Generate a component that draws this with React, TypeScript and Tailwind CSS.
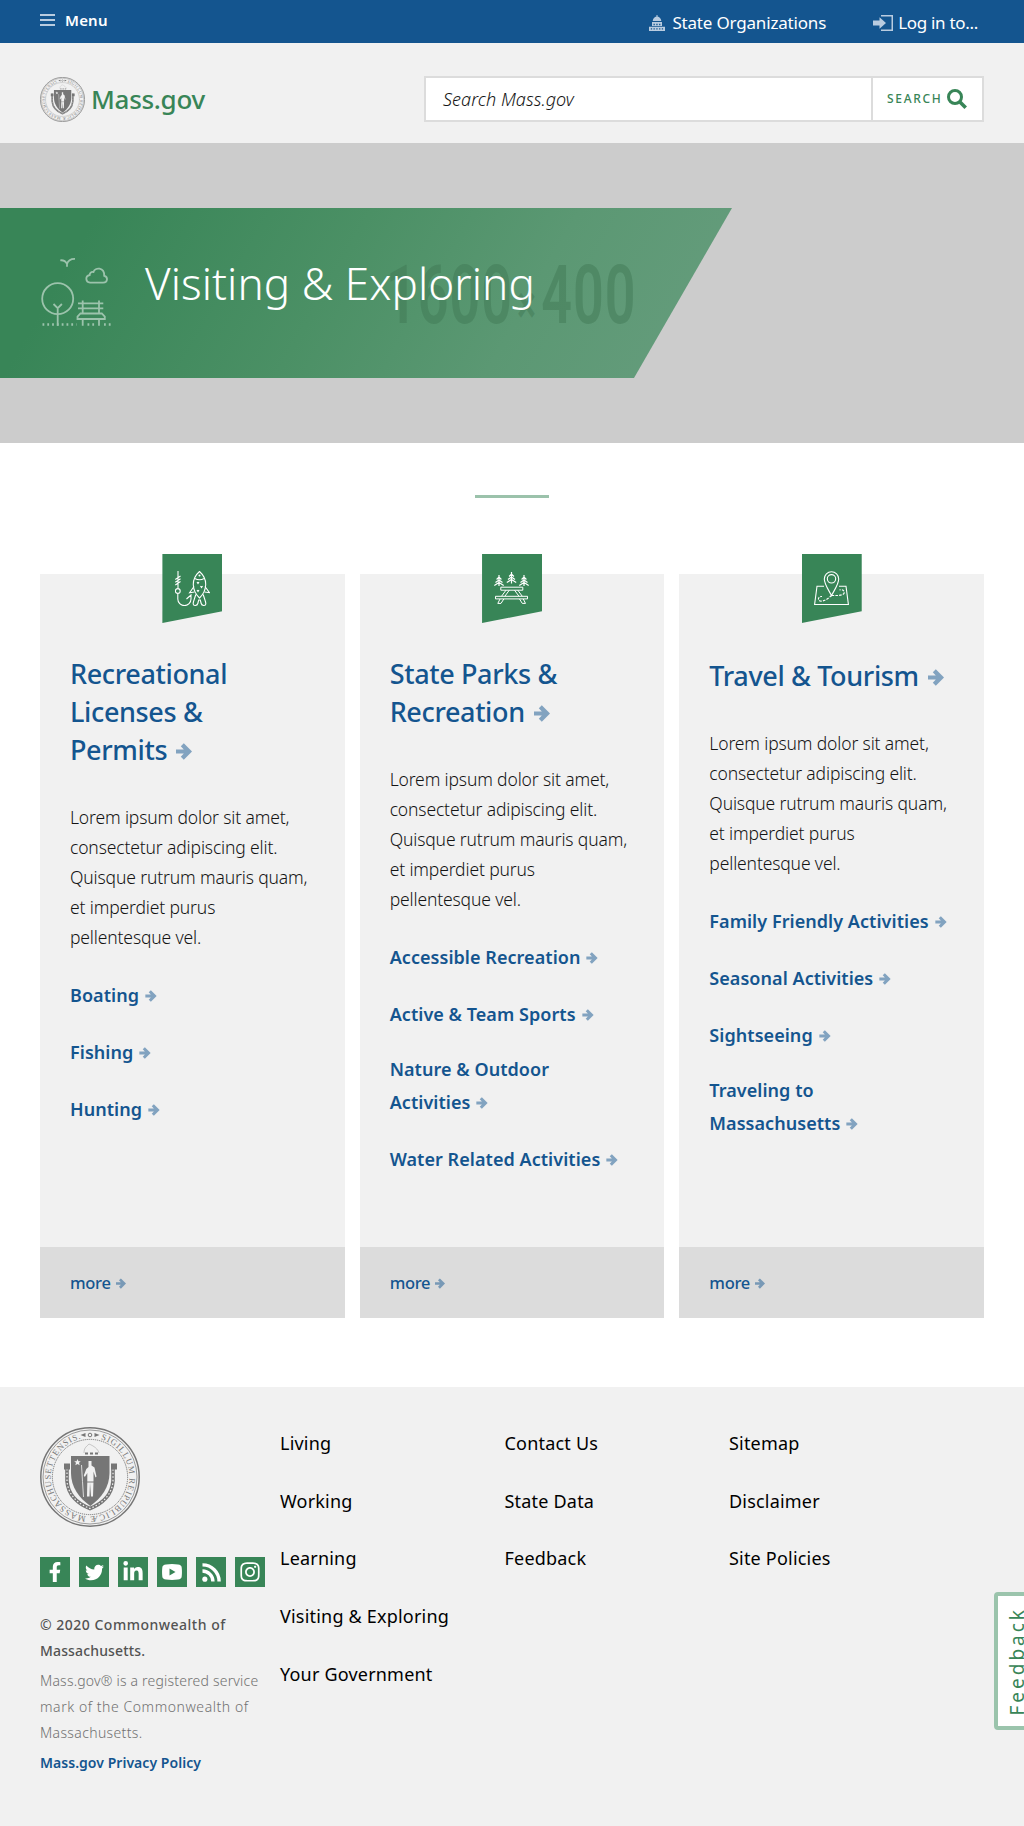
import type { ReactNode } from "react";
import { FaFacebookF, FaInstagram, FaLinkedinIn, FaRss, FaTwitter } from "react-icons/fa";

function Seal({ className }: { className: string }) {
  return (
    <svg viewBox="0 0 100 100" className={className} fill="none" stroke="#767676">
      <circle cx="50" cy="50" r="49.2" strokeWidth="1.5" />
      <circle cx="50" cy="50" r="47" strokeWidth="0.7" />
      <circle cx="50" cy="50" r="37.6" strokeWidth="1" strokeDasharray="1.2 0.8" />
      <defs>
        <path id="seal-ring" d="M50 10.700A39.300 39.300 0 1 1 49.990 10.700" />
      </defs>
      <text fill="#767676" stroke="none" className="font-['Liberation_Serif'] text-[8.6px]">
        <textPath href="#seal-ring" startOffset="11" textLength="226">SIGILLUM REIPUBLICÆ MASSACHUSETTENSIS.</textPath>
      </text>
      <path d="M40.5 8l5-2v4zM59.500 8l-5-2v4z" fill="#767676" stroke="none" />
      <circle cx="50" cy="8" r="1.8" strokeWidth="1" />
      <path d="M31 29h38.500v17c0 14-8 25-19.200 33C39 71 31 60 31 46z" fill="#767676" stroke="none" />
      <path d="M27 37v17c1 14 11 23 23 27.500 12-4.500 22-13.500 23-27.500V37" strokeWidth="3.600" />
      <path d="M27 42v12c1 14 11 23 23 27.500 12-4.500 22-13.500 23-27.500V42" stroke="#f1f1f1" strokeWidth="1.200" strokeDasharray="1.500 2" />
      <path d="M24 36.500h6v6h-6zM71 36.500h6v6h-6z" fill="#767676" stroke="none" />
      <path d="M44 26c0-5 2-6 5-9 5 2 9 5 10 9" strokeWidth="0.6" opacity=".6" />
      <path d="M45 26.500h14" strokeWidth="1.800" strokeDasharray="3 2" />
      <path d="M37.500 32l1 2.200h2.300l-1.800 1.600.700 2.400-2.200-1.300-2.200 1.300.700-2.400-1.800-1.600h2.300z" fill="#f1f1f1" stroke="none" />
      <path d="M48.500 34h3v4.500l3 2 2 9-1 1-2-6v10l-.5 15H51l-1-14-.5 14H47l.3-15V46l-2.500 4-1-1.500 2.500-6.500 2.200-2z" fill="#f1f1f1" stroke="none" />
      <path d="M41.500 38q1 17 2 32" stroke="#f1f1f1" strokeWidth="0.800" />
      <path d="M47 55h7" strokeWidth="1" />
    </svg>
  );
}

function Arrow({ className }: { className: string }) {
  return (
    <svg viewBox="0 0 16 17" className={className} fill="#14558f" fillOpacity="0.5">
      <path d="M0 6.500h7.800L4.800 3.300 7.800.3 16 8.500 7.800 16.700l-3-3 3-3.200H0z" />
    </svg>
  );
}

function FishIcon() {
  return (
    <svg viewBox="0 0 35 35" className="absolute left-[13px] top-[17px] size-[35px]" fill="none" stroke="#fff" strokeWidth="1.100">
      <path d="M3 0v17M.3 8.500 5.500 5M.3 11.300l5.200-3.500M.3 14l5.200-3.500" />
      <circle cx="2.800" cy="20" r="2.400" />
      <path d="M2.800 22.500V28a6.600 6.600 0 0 0 13.200 0v-4l-4.500 4" />
      <path d="M24.500.5c9 8 7.500 19 0 26.500-7.500-7.500-9-18.500 0-26.500zM19.800 7.500q4.700 2.500 9.400 0M22 11l1 1.500 1-1.500M25.500 15l1 1.500 1-1.500M22 19l1 1.500 1-1.500" />
      <path d="M19 15.500l-4.400 6.200 4.900-.7M30 15.500l4.400 6.200-4.900-.7M20.800 23.500c-1 4-2.800 7-2.600 9.500.2 2 4 2 4.600-.5l.9-3.500h1.600l.9 3.500c.6 2.500 4.400 2.500 4.600.5.2-2.500-1.600-5.500-2.600-9.500" />
      <circle cx="24.500" cy="4.500" r=".5" />
    </svg>
  );
}

function ParkIcon() {
  return (
    <svg viewBox="0 0 35 32" className="absolute left-3 top-[18px] h-8 w-[35px]" fill="none" stroke="#fff">
      <path strokeWidth="1.200" d="M5 3v11M2.600 7.500 5 5l2.400 2.500M1.500 10.500 5 8l3.500 2.500M.3 13.500 5 10.500l4.700 3M17.500 0v11.500M15.100 4.500 17.500 2l2.400 2.500M14 7.500 17.500 5 21 7.500M12.800 10.500l4.700-3 4.700 3M30 3v11M27.600 7.500 30 5l2.400 2.500M26.500 10.500 30 8l3.500 2.500M25.300 13.500l4.700-3 4.700 3" />
      <path d="M6.800 15.200h22v3h-22zM1.500 24.300h32v2.600h-32zM12 18.200 7.500 24.300M15.300 18.200l-4.500 6.100M20.500 18.200l4.500 6.100M23.800 18.200l4.500 6.100M6 27l-2.200 4.400H7L9.800 27M29.300 27l2.200 4.400h-3.200L25.500 27" />
    </svg>
  );
}

function MapIcon() {
  return (
    <svg viewBox="0 0 35 34" className="absolute left-3 top-[17px] h-[34px] w-[35px]" fill="none" stroke="#fff" strokeWidth="1.100">
      <path d="M10 15.200H3L.6 33.500h33.800L32 15.200h-7M17.500 24.500C14 18 10.300 13 10.300 8a7.200 7.200 0 0 1 14.400 0c0 5-3.700 10-7.200 16.500z" />
      <circle cx="17.500" cy="7.800" r="4.200" />
      <path strokeDasharray="2.600 1.200" d="M17.500 24.500c-3 3-8 6.300-11.500 5.500-3-1-1.500-5 2-4.500M17.500 24.500c5 0 10 .5 12.500-2 1-3-2-4.500-4.500-3.500" />
    </svg>
  );
}

type Card = { icon: ReactNode; title: string[]; links: string[][] };
const cards: Card[] = [
  { icon: <FishIcon />, title: ["Recreational", "Licenses &", "Permits"], links: [["Boating"], ["Fishing"], ["Hunting"]] },
  {
    icon: <ParkIcon />,
    title: ["State Parks &", "Recreation"],
    links: [["Accessible Recreation"], ["Active & Team Sports"], ["Nature & Outdoor", "Activities"], ["Water Related Activities"]],
  },
  {
    icon: <MapIcon />,
    title: ["Travel & Tourism"],
    links: [["Family Friendly Activities"], ["Seasonal Activities"], ["Sightseeing"], ["Traveling to", "Massachusetts"]],
  },
];
const lorem = ["Lorem ipsum dolor sit amet,", "consectetur adipiscing elit.", "Quisque rutrum mauris quam,", "et imperdiet purus", "pellentesque vel."];
const footerColumns = [
  ["Living", "Working", "Learning", "Visiting & Exploring", "Your Government"],
  ["Contact Us", "State Data", "Feedback"],
  ["Sitemap", "Disclaimer", "Site Policies"],
];

function TopicCard({ icon, title, links }: Card) {
  return (
    <section className="relative flex h-[744px] flex-col bg-[#f1f1f1]">
      <div className="absolute -top-5 left-[122.400px] h-[69px] w-[60px] bg-[#388557] [clip-path:polygon(0_0,100%_0,100%_83%,0_100%)]">{icon}</div>
      <div className={`flex-1 whitespace-nowrap px-[30px] ${title.length === 1 ? "pt-[83px]" : "pt-[81px]"}`}>
        <h2 className="text-[27px] font-medium leading-[38px] tracking-[-0.36px] text-[#14558f]">
          {title.map((line, i) => (
            <span key={line} className="block">
              {line}
              {i === title.length - 1 && <Arrow className="ml-[9px] inline-block h-[17px] w-4 align-[0px]" />}
            </span>
          ))}
        </h2>
        <p className="mt-[32.500px] text-[17.5px] font-light leading-[30px] tracking-[-0.14px] text-[#141414]">
          {lorem.map((line) => <span key={line} className="block">{line}</span>)}
        </p>
        <ul className="mt-[27.500px] text-[18px] font-[560] leading-[33px] tracking-[0.05px] text-[#14558f]">
          {links.map((lines) => (
            <li key={lines[0]} className={lines.length > 1 ? "-mt-0.5 mb-6" : "mb-6"}>
              {lines.map((line, i) => (
                <span key={line} className="block">
                  {line}
                  {i === lines.length - 1 && <Arrow className="ml-1.5 inline-block h-3 w-[12px] align-[0px]" />}
                </span>
              ))}
            </li>
          ))}
        </ul>
      </div>
      <a className="flex h-[71px] items-center bg-[#dcdcdc] px-[30px] pt-[2px] text-[16.5px] font-medium tracking-[-0.3px] text-[#14558f]">
        more
        <Arrow className="ml-[5px] h-[11px] w-[10px]" />
      </a>
    </section>
  );
}

export default function App() {
  return (
    <div className="relative h-[1826px] w-[1024px] overflow-hidden bg-white font-['Noto_Sans',sans-serif]">
      <div className="flex h-[43px] justify-between bg-[#14558f] px-10 text-white">
        <div className="flex h-10 items-center text-[15px] font-semibold tracking-[0.200px]">
          <span className="mr-[10px] flex flex-col gap-[3px]">
            <i className="h-0.5 w-[15px] bg-[#b9cce0]" />
            <i className="h-0.5 w-[15px] bg-[#b9cce0]" />
            <i className="h-0.5 w-[15px] bg-[#b9cce0]" />
          </span>
          Menu
        </div>
        <div className="flex h-[46px] items-center pr-[6px] text-[17px] tracking-[-0.18px]">
          <svg viewBox="0 0 16 16" className="mr-[7px] size-4" fill="#b9cce0">
            <path d="M7.500 0h1v1.500c2 .3 3.500 2 3.800 4.500H3.700C4 3.500 5.500 1.800 7.500 1.500zM3 7h10v4H3zM0 11.700h16V16H0z" />
            <path d="M4.500 8.700h1.300v1.600H4.500zM7.300 8.700h1.300v1.600H7.300zM10.100 8.700h1.300v1.600h-1.300zM1.800 13.200h1.300v1.400H1.800zM4.500 13.200h1.300v1.400H4.500zM7.300 13.200h1.300v1.400H7.300zM10.100 13.200h1.300v1.400h-1.300zM12.800 13.200h1.300v1.400h-1.300z" fill="#14558f" />
          </svg>
          State Organizations
          <svg viewBox="0 0 20 16" className="ml-[47px] mr-[5px] h-4 w-5" fill="#b9cce0">
            <path d="M8 0h12v16H8v-1.500h10.500v-13H8zM0 5.500h6.500V2.300L13 8l-6.500 5.700v-3.200H0z" />
          </svg>
          <span className="tracking-[-0.3px]">Log in to...</span>
        </div>
      </div>

      <header className="flex h-[100px] items-start justify-between bg-[#f1f1f1] px-10">
        <div className="flex pt-[34px]">
          <Seal className="size-[45px]" />
          <span className="ml-[6px] text-[26px] font-medium leading-[45px] tracking-[-0.3px] text-[#388557]">Mass.gov</span>
        </div>
        <div className="mt-[33px] flex h-[46px] w-[560px] border-2 border-[#dcdcdc] bg-white">
          <div className="flex w-[447px] items-center border-r-2 border-[#dcdcdc] pl-[17px] text-[18px] font-light italic tracking-[0.05px] text-[#141414]">Search Mass.gov</div>
          <div className="flex items-center pl-[14px] text-[12px] font-medium tracking-[1.700px] text-[#388557]">
            SEARCH
            <svg viewBox="0 0 20 20" className="ml-[4px] size-5" fill="none" stroke="#388557">
              <circle cx="8" cy="8" r="6.500" strokeWidth="3" />
              <path d="M12.500 12.500l6.200 6.200" strokeWidth="3.600" />
            </svg>
          </div>
        </div>
      </header>

      <div className="relative flex h-[300px] items-center overflow-hidden bg-[#ccc]">
        <div className="relative flex h-[170px] w-[732px] bg-[linear-gradient(120deg,#388557_12%,#4b9065_45%,#5b9873_70%,#679d7e_100%)] pl-[41px] pt-[49px] [clip-path:polygon(0_0,100%_0,634px_100%,0_100%)]">
          <div className="absolute left-[386px] top-[58px] origin-left scale-x-[0.665] whitespace-nowrap font-['Roboto'] text-[81px] font-semibold leading-[60px] tracking-[1.500px] text-[#3d7551]/45">
            1600<span className="mx-[6px] text-[54px]">×</span>400
          </div>
          <svg viewBox="0 0 70 70" className="relative size-[70px]" fill="none" stroke="#9cc3ac" strokeWidth="1.800">
            <circle cx="16.700" cy="41.700" r="15.500" />
            <path d="M16.700 68.700V51M12.500 47l4.200 4.200 4.200-4.200M37 46.300h25.300M37 51.300h25.300M41.700 43.500v13M58 43.500v13M41.700 62v6.700M58 62v6.700M39.500 56.500h21.300l3 3.200V62H36.500v-2.300z" />
            <path d="M49 25.600h13.200c4.800 0 5-6 1-6.800C63.500 10 54 10 52.500 15c-3-.3-3.800 1.500-3.800 3-4.800 1-4.300 7.300.3 7.600z" />
            <path d="M19.300 3.300c3.500-.3 5.700 1.500 6.700 3.700 1-3.500 4-5.300 8-5.200M26 5.500v4.300" />
            <path strokeWidth="2.500" strokeDasharray="1.800 3" d="M1.500 67.500h34M46.500 67.500h9M63 67.500h7" />
          </svg>
          <h1 className="relative ml-[34px] -mt-[4px] text-[44px] font-light leading-[60px] tracking-[0.080px] text-white">Visiting &amp; Exploring</h1>
        </div>
      </div>

      <div className="mx-auto mt-[52px] h-[3px] w-[74px] bg-[#9bc2ab]" />

      <main className="mx-10 mt-[76px] grid grid-cols-3 gap-[15px]">
        {cards.map((card) => <TopicCard key={card.title[0]} {...card} />)}
      </main>

      <footer className="mt-[69px] flex h-[439px] bg-[#f1f1f1] px-10 pt-10">
        <div className="w-[240px]">
          <Seal className="size-[100px]" />
          <div className="mt-[30px] flex gap-[9px] text-white">
            <span className="flex size-[30px] items-center justify-center bg-[#388557]"><FaFacebookF size={20} /></span>
            <span className="flex size-[30px] items-center justify-center bg-[#388557]"><FaTwitter size={19} /></span>
            <span className="flex size-[30px] items-center justify-center bg-[#388557]"><FaLinkedinIn size={22} /></span>
            <span className="flex size-[30px] items-center justify-center bg-[#388557]">
              <svg viewBox="0 0 20 16" className="h-4 w-5" fill="#fff" fillRule="evenodd"><path d="M4 .4Q10-.3 16 .4q3.500.3 3.700 3Q20.200 8 19.700 12.600q-.2 2.700-3.700 3-6 .7-12 0-3.500-.3-3.700-3Q-.2 8 .3 3.400.5.700 4 .4zM7.500 4.500v7L13.500 8z" /></svg>
            </span>
            <span className="flex size-[30px] items-center justify-center bg-[#388557]">
              <svg viewBox="0 0 20 20" className="size-[19px]" fill="none" stroke="#fff" strokeWidth="3.600"><path d="M.5 8.500a11 11 0 0 1 11 11M.5 2a17.500 17.500 0 0 1 17.500 17.500" /><circle cx="3" cy="17" r="2.700" fill="#fff" stroke="none" /></svg>
            </span>
            <span className="flex size-[30px] items-center justify-center bg-[#388557]"><FaInstagram size={22} /></span>
          </div>
          <div className="mt-[25px] whitespace-nowrap text-[14px] leading-[26px]">
            <p className="font-medium text-[#535353]">
              <span className="block tracking-[0.500px]">© 2020 Commonwealth of</span>
              <span className="block tracking-[0.150px]">Massachusetts.</span>
            </p>
            <p className="mt-1 font-light text-[#707070]">
              <span className="block tracking-[0.200px]">Mass.gov® is a registered service</span>
              <span className="block tracking-[0.560px]">mark of the Commonwealth of</span>
              <span className="block tracking-[0.360px]">Massachusetts.</span>
            </p>
            <p className="mt-1 font-semibold tracking-[0.040px] text-[#14558f]">Mass.gov Privacy Policy</p>
          </div>
        </div>
        {footerColumns.map((column) => (
          <ul key={column[0]} className="-mt-[13px] w-[224.500px] text-[18px] leading-[58px] tracking-[0.200px] text-black">
            {column.map((item) => <li key={item} className="h-[57.700px]">{item}</li>)}
          </ul>
        ))}
      </footer>

      <div className="absolute left-[994px] top-[1592px] flex h-[138px] w-[42px] items-center justify-start rounded-[4px] border-4 border-[#9bc4ac] bg-white pl-[6px]">
        <span className="rotate-180 text-[19px] leading-[26px] tracking-[3px] text-[#388557] [writing-mode:vertical-rl]">Feedback</span>
      </div>
    </div>
  );
}
